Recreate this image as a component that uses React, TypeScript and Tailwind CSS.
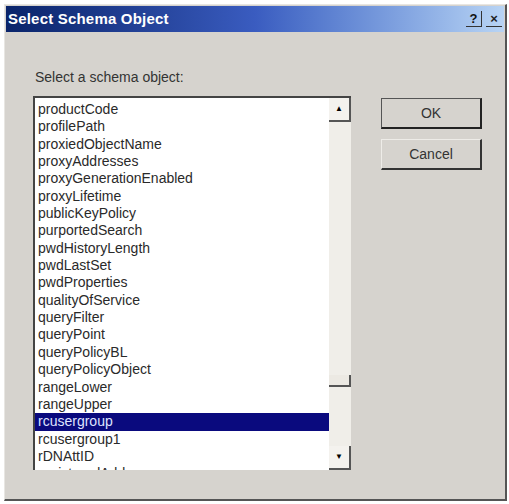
import React from "react";

const items = [
  "productCode",
  "profilePath",
  "proxiedObjectName",
  "proxyAddresses",
  "proxyGenerationEnabled",
  "proxyLifetime",
  "publicKeyPolicy",
  "purportedSearch",
  "pwdHistoryLength",
  "pwdLastSet",
  "pwdProperties",
  "qualityOfService",
  "queryFilter",
  "queryPoint",
  "queryPolicyBL",
  "queryPolicyObject",
  "rangeLower",
  "rangeUpper",
  "rcusergroup",
  "rcusergroup1",
  "rDNAttID",
  "registeredAddress",
];

export default function App() {
  return (
    <div className="w-[509px] h-[504px] bg-white overflow-hidden" style={{ fontFamily: '"Liberation Sans", Arial, sans-serif' }}>
      <div className="ml-[4px] mt-[4px] w-[503px] h-[497px] bg-[#d6d3ce] border-l border-t border-[#e8e6e2] border-r-2 border-b-2 border-r-[#555] border-b-[#555] flex flex-col">
        {/* Title bar */}
        <div className="h-[26px] mx-[1px] mt-[1px] flex items-center justify-between bg-gradient-to-r from-[#0a246a] via-[#3a5cc0] to-[#b8d4f4] pl-[2px] pr-[2px]">
          <span className="text-white font-bold text-[15px] tracking-[0.2px]">Select Schema Object</span>
          <div className="flex items-center gap-[4px]">
            <div className="w-[16px] h-[16px] flex items-center justify-center text-[13px] font-bold text-[#111] border-r border-b border-[#333] leading-none">?</div>
            <div className="w-[16px] h-[16px] flex items-center justify-center text-[13px] font-bold text-[#222] border-b border-[#333] leading-none">×</div>
          </div>
        </div>

        {/* Body */}
        <div className="flex pl-[28px] pt-[38px]">
          <div className="flex flex-col">
            <div className="text-[14px] text-[#333] leading-none pl-[2px]">Select a schema object:</div>
            <div className="mt-[12px] w-[318px] h-[374px] bg-white border-t-2 border-l-2 border-[#444] flex overflow-hidden">
              <div className="flex-1 flex flex-col pt-[3px] overflow-hidden">
                {items.map((it) => (
                  <div
                    key={it}
                    className={
                      "h-[17.35px] leading-[17px] pl-[3px] text-[14px] shrink-0 whitespace-nowrap " +
                      (it === "rcusergroup" ? "bg-[#0a0a7e] text-[#dfe3ff]" : "text-[#2a2a2a]")
                    }
                  >
                    {it}
                  </div>
                ))}
              </div>
              {/* Scrollbar */}
              <div className="w-[22px] flex flex-col bg-[#f0eee9]">
                <div className="h-[24px] bg-[#f4f2ee] border-r-2 border-b-2 border-[#555] flex items-center justify-center text-[8px] text-black leading-none">▲</div>
                <div className="flex-1 flex flex-col">
                  <div className="h-[253px]" />
                  <div className="h-[12px] border-r-2 border-b-2 border-[#555] bg-[#ece9e3]" />
                  <div className="flex-1" />
                </div>
                <div className="h-[24px] bg-[#f4f2ee] border-r-2 border-b-2 border-[#555] flex items-center justify-center text-[8px] text-black leading-none">▼</div>
              </div>
            </div>
          </div>

          <div className="flex flex-col ml-[30px] mt-[28px] gap-[10px]">
            <div className="w-[101px] h-[31px] flex items-center justify-center text-[14px] text-[#333] border border-[#555] border-r-2 border-b-2 border-r-[#222] border-b-[#222] bg-[#d6d3ce]">
              OK
            </div>
            <div className="w-[101px] h-[31px] flex items-center justify-center text-[14px] text-[#333] border-t border-l border-[#eeece8] border-r-2 border-b-2 border-r-[#333] border-b-[#333] bg-[#d6d3ce]">
              Cancel
            </div>
          </div>
        </div>
      </div>
    </div>
  );
}
